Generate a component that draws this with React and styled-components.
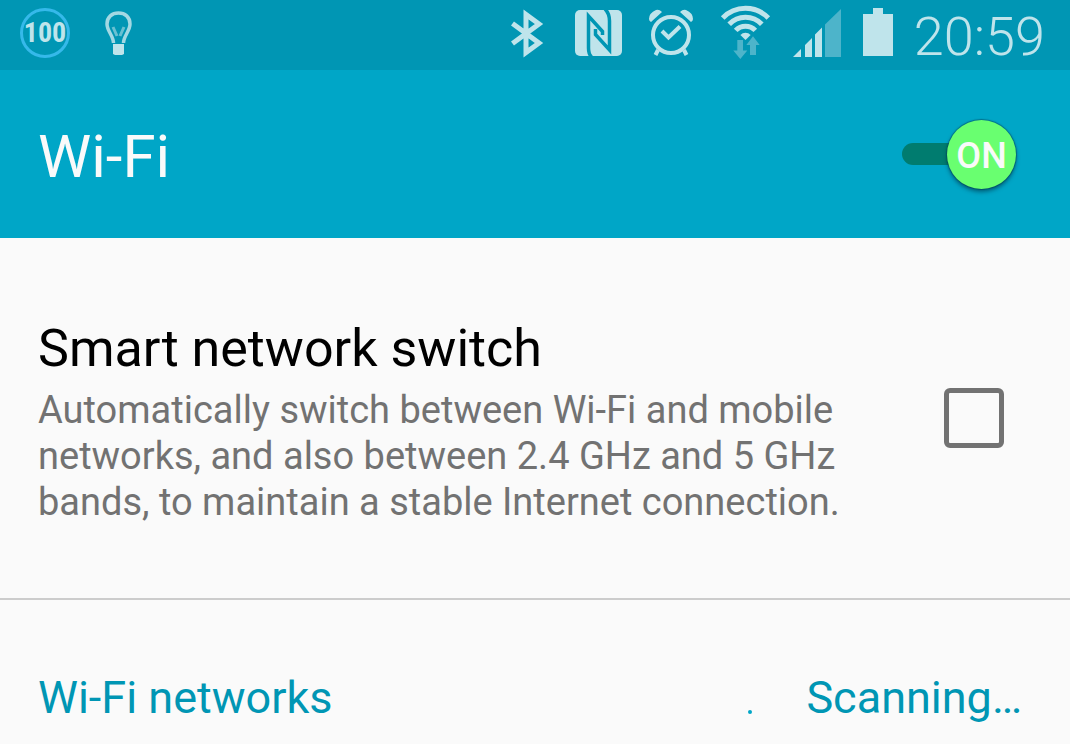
import React, {useState} from "react";
import styled, {createGlobalStyle} from "styled-components";

const GlobalStyle = createGlobalStyle`
  * {
    box-sizing: border-box;
  }

  body {
    margin: 0;
    background: #fafafa;
    font-family: Roboto, "Noto Sans", sans-serif;
  }
`;

const StyleStatusBar = styled.div`
  display: flex;
  align-items: center;
  justify-content: space-between;
  height: 70px;
  padding: 0 25px 5px 20px;
  background: #0096b4;
  color: #bfe4eb;

  svg {
    display: block;
    flex: none;
  }
`;

const StyleStatusGroup = styled.div`
  display: flex;
  align-items: center;
  gap: ${({$gap}) => $gap}px;
`;

const StyleLevel = styled.span`
  display: flex;
  align-items: center;
  justify-content: center;
  width: 50px;
  height: 50px;
  border: 3px solid #35b9ea;
  border-radius: 50%;
  font-family: "Roboto Condensed", "Liberation Sans Narrow", Roboto, sans-serif;
  font-size: 28px;
  font-weight: bold;
`;

const StyleClock = styled.time`
  padding-top: 8px;
  font-size: 54px;
  font-weight: 300;
  line-height: 58px;
`;

const StyleHeader = styled.header`
  display: flex;
  align-items: center;
  justify-content: space-between;
  height: 168px;
  padding: 0 54px 0 38px;
  background: #00a6c7;
  color: #fafafa;

  h1 {
    margin: 0;
    padding-top: 4px;
    font-size: 60px;
    font-weight: 400;
  }
`;

const StyleToggle = styled.label`
  display: flex;
  align-items: center;
  cursor: pointer;

  input {
    appearance: none;
    width: 80px;
    height: 22px;
    margin: 0;
    border-radius: 11px;
    background: #007c6f;
    cursor: pointer;
  }

  span {
    position: relative;
    width: 69px;
    height: 69px;
    margin-left: -35px;
    border-radius: 50%;
    background: #69ff70;
    box-shadow: 0 3px 4px rgba(0, 50, 70, 0.6), 0 0 1px 1px rgba(0, 70, 90, 0.5);
    font-size: 36px;
    font-weight: 500;
    line-height: 72px;
    text-align: center;
  }
`;

const StyleOption = styled.label`
  display: flex;
  align-items: center;
  justify-content: space-between;
  gap: 60px;
  padding: 73px 66px 73px 38px;
  border-bottom: 2px solid #ccc;
  cursor: pointer;

  input {
    appearance: none;
    flex: none;
    width: 60px;
    height: 60px;
    margin: 0;
    border: 5px solid #727272;
    border-radius: 6px;
    cursor: pointer;

    &:checked {
      background: #727272;
    }
  }
`;

const StyleOptionTitle = styled.div`
  color: #000;
  font-size: 52px;
  line-height: 76px;
`;

const StyleOptionText = styled.div`
  color: #727272;
  font-size: 38px;
  line-height: 46px;
`;

const StyleNetworks = styled.section`
  display: flex;
  align-items: center;
  justify-content: space-between;
  padding: 70px 48px 16px 38px;
  color: #0096b4;
  font-size: 45px;
  line-height: 56px;

  h2 {
    margin: 0;
    font-size: 45px;
    font-weight: 400;
  }
`;

const StyleScan = styled.div`
  display: flex;
  align-items: center;
  gap: 28px;
`;

function BulbIcon() {
    return <svg width="30" height="48" viewBox="0 0 30 48" fill="none" stroke="currentColor">
        <path d="M9.5 34 C9.5 27 3 22 3 15 C3 8 8 4 14.5 4 C21 4 26 8 26 15 C26 22 19.5 27 19.5 34" strokeWidth="3.5" strokeOpacity=".85"/>
        <path d="M9 18 L13 27 M20 18 L16 27" strokeWidth="3" strokeOpacity=".55"/>
        <path d="M9 35 H20 V45 L18 46 H11 L9 45 Z" fill="currentColor" stroke="none"/>
    </svg>;
}

function BluetoothIcon() {
    return <svg width="43" height="50" viewBox="0 0 43 50" fill="none" stroke="currentColor" strokeWidth="5">
        <path d="M3.5 15.5 L30 35 L17 44.5 V6.5 L30 16 L3.5 35.5"/>
    </svg>;
}

function NfcIcon() {
    return <svg width="51" height="50" viewBox="0 0 51 50">
        <rect x="1" y="2" width="47" height="46" rx="5" fill="currentColor"/>
        <g fill="none" stroke="#0096b4" strokeWidth="3.5">
            <path d="M17.5 49 C15.5 47 14.5 44 14.5 40 V8 L28.5 23.5 V27"/>
            <path d="M31 1 C34 4 35.5 8 35.5 13 V42 L21.5 26.5 V21"/>
        </g>
    </svg>;
}

function AlarmIcon() {
    return <svg width="51" height="50" viewBox="-1 0 51 50" fill="none" stroke="currentColor" strokeWidth="4">
        <circle cx="23" cy="27" r="18"/>
        <path d="M14 23 L20.5 29.5 L32 18.5"/>
        <path d="M10 42 L7.5 47 M36 42 L38.5 47"/>
        <path d="M3 14 L14 4 Q11 1 8 2 Q1 5 1 11 Q1 13 3 14 Z M43 14 L32 4 Q35 1 38 2 Q45 5 45 11 Q45 13 43 14 Z" fill="currentColor" stroke="none"/>
    </svg>;
}

function WifiIcon() {
    return <svg width="51" height="56" viewBox="0 0 51 56">
        <g fill="none" stroke="currentColor" strokeWidth="5">
            <path d="M2.7 13 A31.5 31.5 0 0 1 48.3 13"/>
            <path d="M9.2 19.2 A22.5 22.5 0 0 1 41.8 19.2"/>
            <path d="M15.7 25.4 A13.5 13.5 0 0 1 35.3 25.4"/>
        </g>
        <path d="M20.4 30 A7 7 0 0 1 30.6 30 L25.5 35 Z" fill="currentColor"/>
        <path d="M17.3 35 H23 V45.5 H27.3 L20.3 54 L13.3 45.5 H17.3 Z" fill="#4db4ca"/>
        <path d="M33 31.3 L39.7 40 H36 V50 H30 V40 H26.3 Z" fill="#4db4ca"/>
    </svg>;
}

function SignalIcon() {
    return <svg width="48" height="48" viewBox="0 0 48 48" fill="currentColor">
        <path d="M0 48 L8 40 V48 Z M12 36 L19 29 V48 H12 Z M22 25.5 L29 18.5 V48 H22 Z"/>
        <path d="M32 15.5 L48 0 V48 H32 Z" fill="#4db4ca"/>
    </svg>;
}

function BatteryIcon() {
    return <svg width="30" height="50" viewBox="0 0 30 50" fill="currentColor">
        <path d="M0 6 H10 V0 H20 V6 H30 V48 H0 Z"/>
    </svg>;
}

function Spinner() {
    return <svg width="30" height="40" viewBox="0 0 30 40" role="img" aria-label="Scanning">
        <circle cx="2" cy="34" r="2" fill="#00a6c7"/>
    </svg>;
}

function StatusBar() {
    return <StyleStatusBar>
        <StyleStatusGroup $gap={34}>
            <StyleLevel>100</StyleLevel>
            <BulbIcon />
        </StyleStatusGroup>
        <StyleStatusGroup $gap={21}>
            <StyleStatusGroup $gap={22}>
                <BluetoothIcon />
                <NfcIcon />
                <AlarmIcon />
                <WifiIcon />
                <SignalIcon />
                <BatteryIcon />
            </StyleStatusGroup>
            <StyleClock>20:59</StyleClock>
        </StyleStatusGroup>
    </StyleStatusBar>;
}

function App() {
    const [wifi, setWifi] = useState(true);
    const [smart, setSmart] = useState(false);

    return <>
        <GlobalStyle />
        <StatusBar />
        <StyleHeader>
            <h1>Wi-Fi</h1>
            <StyleToggle>
                <input type="checkbox" role="switch" aria-label="Wi-Fi" checked={wifi} onChange={(e) => setWifi(e.target.checked)}/>
                <span>{wifi ? "ON" : "OFF"}</span>
            </StyleToggle>
        </StyleHeader>
        <main>
            <StyleOption>
                <div>
                    <StyleOptionTitle>Smart network switch</StyleOptionTitle>
                    <StyleOptionText>
                        Automatically switch between Wi-Fi and mobile networks, and also between 2.4 GHz and 5 GHz bands, to maintain a stable Internet connection.
                    </StyleOptionText>
                </div>
                <input type="checkbox" checked={smart} onChange={(e) => setSmart(e.target.checked)}/>
            </StyleOption>
            <StyleNetworks>
                <h2>Wi-Fi networks</h2>
                <StyleScan>
                    <Spinner />
                    <span>Scanning…</span>
                </StyleScan>
            </StyleNetworks>
        </main>
    </>;
}

export default App;
